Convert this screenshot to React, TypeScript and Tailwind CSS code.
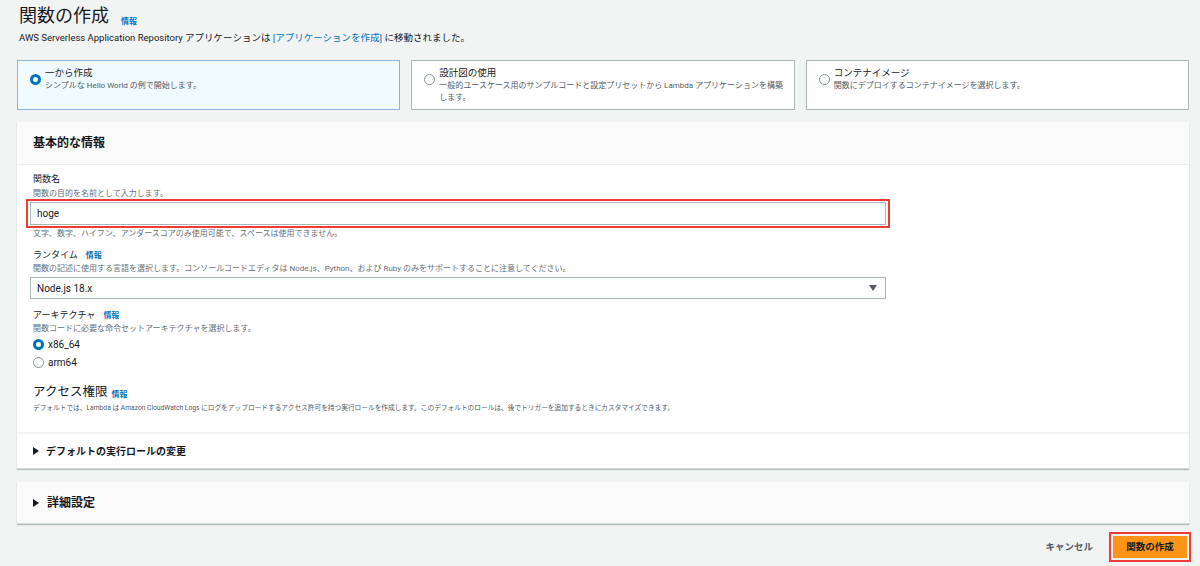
import React from "react";

const font = { fontFamily: "Roboto, 'Noto Sans CJK JP', sans-serif" };

function Info() {
  return <span className="text-[8px] font-bold leading-none text-[#0073bb]">情報</span>;
}

function Radio({ checked }: { checked?: boolean }) {
  return checked ? (
    <span className="inline-block h-[11px] w-[11px] shrink-0 rounded-full border-[3px] border-[#0073bb] bg-white" />
  ) : (
    <span className="inline-block h-[11px] w-[11px] shrink-0 rounded-full border border-[#879596] bg-white" />
  );
}

function Tile({
  title,
  desc,
  checked,
}: {
  title: string;
  desc: string;
  checked?: boolean;
}) {
  return (
    <div
      className={
        checked
          ? "h-[50px] border border-[#8ab5d8] bg-[#f1faff] pl-[12px] pr-[10px] pt-[5px]"
          : "h-[50px] border border-[#aab7b8] bg-white pl-[12px] pr-[10px] pt-[5px]"
      }
    >
      <div className="flex items-start gap-[4px]">
        <div className="pt-[2px]">
          <Radio checked={checked} />
        </div>
        <div>
          <div className="text-[9.5px] leading-[14px] text-[#16191f]">{title}</div>
          <div className="text-[8px] leading-[12px] text-[#545b64]">{desc}</div>
        </div>
      </div>
    </div>
  );
}

function Caret() {
  return (
    <svg width="6" height="8" viewBox="0 0 6 8" className="shrink-0">
      <path d="M0 0 L6 4 L0 8 Z" fill="#16191f" />
    </svg>
  );
}

export default function App() {
  return (
    <div className="h-[566px] w-[1200px] overflow-hidden bg-[#f2f3f3] pl-[17px] pr-[11px] pt-[3px]" style={font}>
      <div className="flex h-[26px] items-center gap-[12px] pl-[2px]">
        <h1 className="text-[18px] leading-[26px] text-[#16191f]">関数の作成</h1>
        <span className="mt-[6px]">
          <Info />
        </span>
      </div>
      <p className="mt-[3px] pl-[2px] text-[9.5px] leading-[12px] text-[#16191f]">
        AWS Serverless Application Repository アプリケーションは{" "}
        <span className="text-[#0073bb]">[アプリケーションを作成]</span> に移動されました。
      </p>

      <div className="mt-[16px] grid grid-cols-3 gap-[11px]">
        <Tile checked title="一から作成" desc="シンプルな Hello World の例で開始します。" />
        <Tile
          title="設計図の使用"
          desc="一般的ユースケース用のサンプルコードと設定プリセットから Lambda アプリケーションを構築します。"
        />
        <Tile title="コンテナイメージ" desc="関数にデプロイするコンテナイメージを選択します。" />
      </div>

      <div className="mt-[12px] border-b border-[#d5dbdb] bg-white shadow-[0_1px_1px_rgba(0,28,36,0.25)]">
        <div className="flex h-[43px] items-center border-b border-[#eaeded] bg-[#fafafa] px-[16px]">
          <h2 className="text-[12px] font-bold text-[#16191f]">基本的な情報</h2>
        </div>

        <div className="px-[16px] pt-[8px]">
          <div className="text-[9px] leading-[13px] text-[#16191f]">関数名</div>
          <div className="mt-[2px] text-[8px] leading-[11px] text-[#687078]">関数の目的を名前として入力します。</div>
          <div className="-ml-[7px] w-[864px] border-2 border-[#ee3b36] p-[1px] pl-[2px] pr-[2px]">
            <div className="flex h-[23px] items-center border border-[#aab7b8] bg-white px-[6px] text-[10px] text-[#16191f]">
              hoge
            </div>
          </div>
          <div className="text-[8px] leading-[11px] text-[#687078]">
            文字、数字、ハイフン、アンダースコアのみ使用可能で、スペースは使用できません。
          </div>

          <div className="mt-[10px] flex items-center gap-[8px] text-[9px] leading-[13px] text-[#16191f]">
            ランタイム
            <Info />
          </div>
          <div className="mt-[1px] text-[8px] leading-[11px] text-[#687078]">
            関数の記述に使用する言語を選択します。コンソールコードエディタは Node.js、Python、および Ruby のみをサポートすることに注意してください。
          </div>
          <div className="-ml-[3px] mt-[3px] flex h-[22px] w-[856px] items-center justify-between border border-[#aab7b8] bg-white pl-[6px] pr-[8px] text-[10px] text-[#16191f]">
            <span>Node.js 18.x</span>
            <svg width="8" height="6" viewBox="0 0 8 6">
              <path d="M0 0 H8 L4 6 Z" fill="#545b64" />
            </svg>
          </div>

          <div className="mt-[10px] flex items-center gap-[8px] text-[9px] leading-[13px] text-[#16191f]">
            アーキテクチャ
            <Info />
          </div>
          <div className="mt-[1px] text-[8px] leading-[11px] text-[#687078]">
            関数コードに必要な命令セットアーキテクチャを選択します。
          </div>
          <div className="mt-[3px] flex h-[14px] items-center gap-[4px] text-[10px] text-[#16191f]">
            <Radio checked />
            x86_64
          </div>
          <div className="mt-[4px] flex h-[14px] items-center gap-[4px] text-[10px] text-[#16191f]">
            <Radio />
            arm64
          </div>

          <div className="mt-[15px] flex h-[17px] items-center gap-[4px] text-[12.5px] text-[#16191f]">
            アクセス権限
            <span className="mt-[2px]">
              <Info />
            </span>
          </div>
          <div className="mt-[3px] text-[6.7px] leading-[9px] text-[#545b64]">
            デフォルトでは、Lambda は Amazon CloudWatch Logs にログをアップロードするアクセス許可を持つ実行ロールを作成します。このデフォルトのロールは、後でトリガーを追加するときにカスタマイズできます。
          </div>
        </div>

        <div className="mt-[19px] border-t-2 border-[#f2f3f3]" />
        <div className="flex h-[34px] items-center gap-[7px] px-[16px]">
          <Caret />
          <span className="text-[10px] font-bold text-[#16191f]">デフォルトの実行ロールの変更</span>
        </div>
      </div>

      <div className="mt-[13px] flex h-[42px] items-center gap-[8px] border-b border-[#d5dbdb] bg-[#fafafa] px-[16px] shadow-[0_1px_1px_rgba(0,28,36,0.25)]">
        <Caret />
        <span className="text-[12px] font-bold text-[#16191f]">詳細設定</span>
      </div>

      <div className="-mr-[2px] mt-[8px] flex items-center justify-end gap-[16px]">
        <span className="text-[9.5px] font-bold text-[#545b64]">キャンセル</span>
        <div className="border-2 border-[#ee3b36] p-[2px]">
          <div className="flex h-[22px] w-[74px] items-center justify-center bg-[#ff9419] text-[9.5px] font-bold text-[#16191f]">
            関数の作成
          </div>
        </div>
      </div>
    </div>
  );
}
